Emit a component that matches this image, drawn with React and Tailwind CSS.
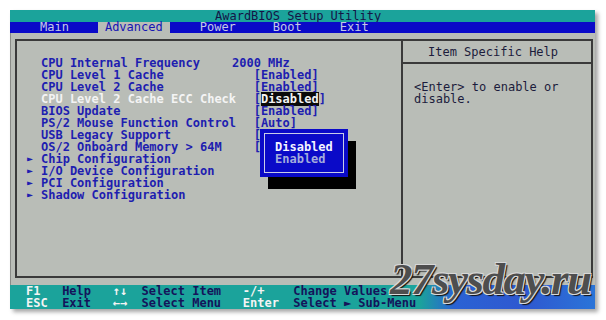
export default function App() {
  const rows = [
    { label: "CPU Internal Frequency", value: "2000 MHz" },
    { label: "CPU Level 1 Cache", value: "   [Enabled]" },
    { label: "CPU Level 2 Cache", value: "   [Enabled]" },
    { label: "CPU Level 2 Cache ECC Check", value: "sel", active: true },
    { label: "BIOS Update", value: "   [Enabled]" },
    { label: "PS/2 Mouse Function Control", value: "   [Auto]" },
    { label: "USB Legacy Support", value: "   [" },
    { label: "OS/2 Onboard Memory > 64M", value: "   [" },
    { label: "Chip Configuration", sub: true },
    { label: "I/O Device Configuration", sub: true },
    { label: "PCI Configuration", sub: true },
    { label: "Shadow Configuration", sub: true },
  ];

  return (
    <div className="relative w-[606px] h-[320px] bg-white overflow-hidden">
      <div className="pt-[10px] pl-[10px]">
        <div className="w-[585px] flex flex-col shadow-[3px_3px_4px_rgba(0,0,0,0.35)] font-['DejaVu_Sans_Mono',monospace] text-[12px] leading-[12px]">
          {/* title */}
          <div className="h-[12px] bg-[#1ba39b] text-[#141446] pl-[205px] whitespace-pre">
            AwardBIOS Setup Utility
          </div>
          {/* menu */}
          <div className="h-[11px] bg-[#0a0ac8] flex items-stretch text-[#c4c8e4] leading-[11px] whitespace-pre">
            <span className="ml-[30px]">Main</span>
            <span className="ml-[29px] px-[7px] bg-[#b9bdb7] text-[#1414b4]">Advanced</span>
            <span className="ml-[30px]">Power</span>
            <span className="ml-[37px]">Boot</span>
            <span className="ml-[38px]">Exit</span>
          </div>
          {/* content */}
          <div className="relative bg-[#b9bdb7] pt-[6px] pb-[7px] pl-[4px] pr-[2px] border-l border-[#8a8c88]">
            <div className="h-[239px] border-2 border-[#3a3a3a] flex">
              <div className="w-[386px] border-r-2 border-[#3a3a3a] pt-[16px] pl-[10px] text-[#1e1eb0] font-bold">
                {rows.map((r, i) => (
                  <div key={i} className="flex h-[12px] whitespace-pre">
                    <span className="w-[14px] text-[10px]">{r.sub ? "►" : ""}</span>
                    <span className={`w-[191px] ${r.active ? "text-[#f4f4f4]" : ""}`}>{r.label}</span>
                    {r.value === "sel" ? (
                      <span>
                        {"   ["}
                        <span className="bg-[#0a0a0a] text-[#f4f4f4]">Disabled</span>
                        {"]"}
                      </span>
                    ) : (
                      <span>{r.value || ""}</span>
                    )}
                  </div>
                ))}
              </div>
              <div className="flex-1 flex flex-col text-[#1c1c3c]">
                <div className="h-[21px] flex items-center pl-[25px] whitespace-pre">Item Specific Help</div>
                <div className="border-t-2 border-[#3a3a3a] pt-[17px] pl-[11px] whitespace-pre">
                  <div>&lt;Enter&gt; to enable or</div>
                  <div>disable.</div>
                </div>
              </div>
            </div>
            {/* popup */}
            <div className="absolute left-[249px] top-[96px] w-[88px] h-[48px] bg-[#0a0ac8] shadow-[8px_12px_0_#000] p-[4px]">
              <div className="h-full border border-[#c8cce8] pt-[7px] pl-[10px] font-bold whitespace-pre">
                <div className="text-[#f4f4ff]">Disabled</div>
                <div className="text-[#a4acdc]">Enabled</div>
              </div>
            </div>
          </div>
          {/* footer */}
          <div className="h-[24px] bg-[linear-gradient(90deg,#1ba39b_0%,#1ba39b_70%,#2a62d4_76%,#2f58d0_88%,#2a74d8_100%)] pl-[16px] whitespace-pre font-bold">
            <div>
              <span className="text-[#f4f4f4]">F1</span>
              <span className="text-[#14145a]">{"   Help   "}</span>
              <span className="text-[#f4f4f4]">↑↓</span>
              <span className="text-[#14145a]">{"  Select Item   "}</span>
              <span className="text-[#f4f4f4]">-/+</span>
              <span className="text-[#14145a]">{"    Change Values"}</span>
            </div>
            <div>
              <span className="text-[#f4f4f4]">ESC</span>
              <span className="text-[#14145a]">{"  Exit   "}</span>
              <span className="text-[#f4f4f4]">←→</span>
              <span className="text-[#14145a]">{"  Select Menu   "}</span>
              <span className="text-[#f4f4f4]">Enter</span>
              <span className="text-[#14145a]">{"  Select ► Sub-Menu"}</span>
            </div>
          </div>
        </div>
      </div>
      {/* watermark */}
      <div className="absolute left-[390px] top-[257px] font-['Liberation_Serif',serif] italic font-bold text-[45px] tracking-[-1.5px] leading-none text-[#4e4e4e] whitespace-pre [text-shadow:1px_1px_0_#d8d8d8,-1px_-1px_0_#d8d8d8,1px_-1px_0_#d8d8d8,-1px_1px_0_#d8d8d8,2px_2px_1px_#111]">
        27sysday.ru
      </div>
    </div>
  );
}
